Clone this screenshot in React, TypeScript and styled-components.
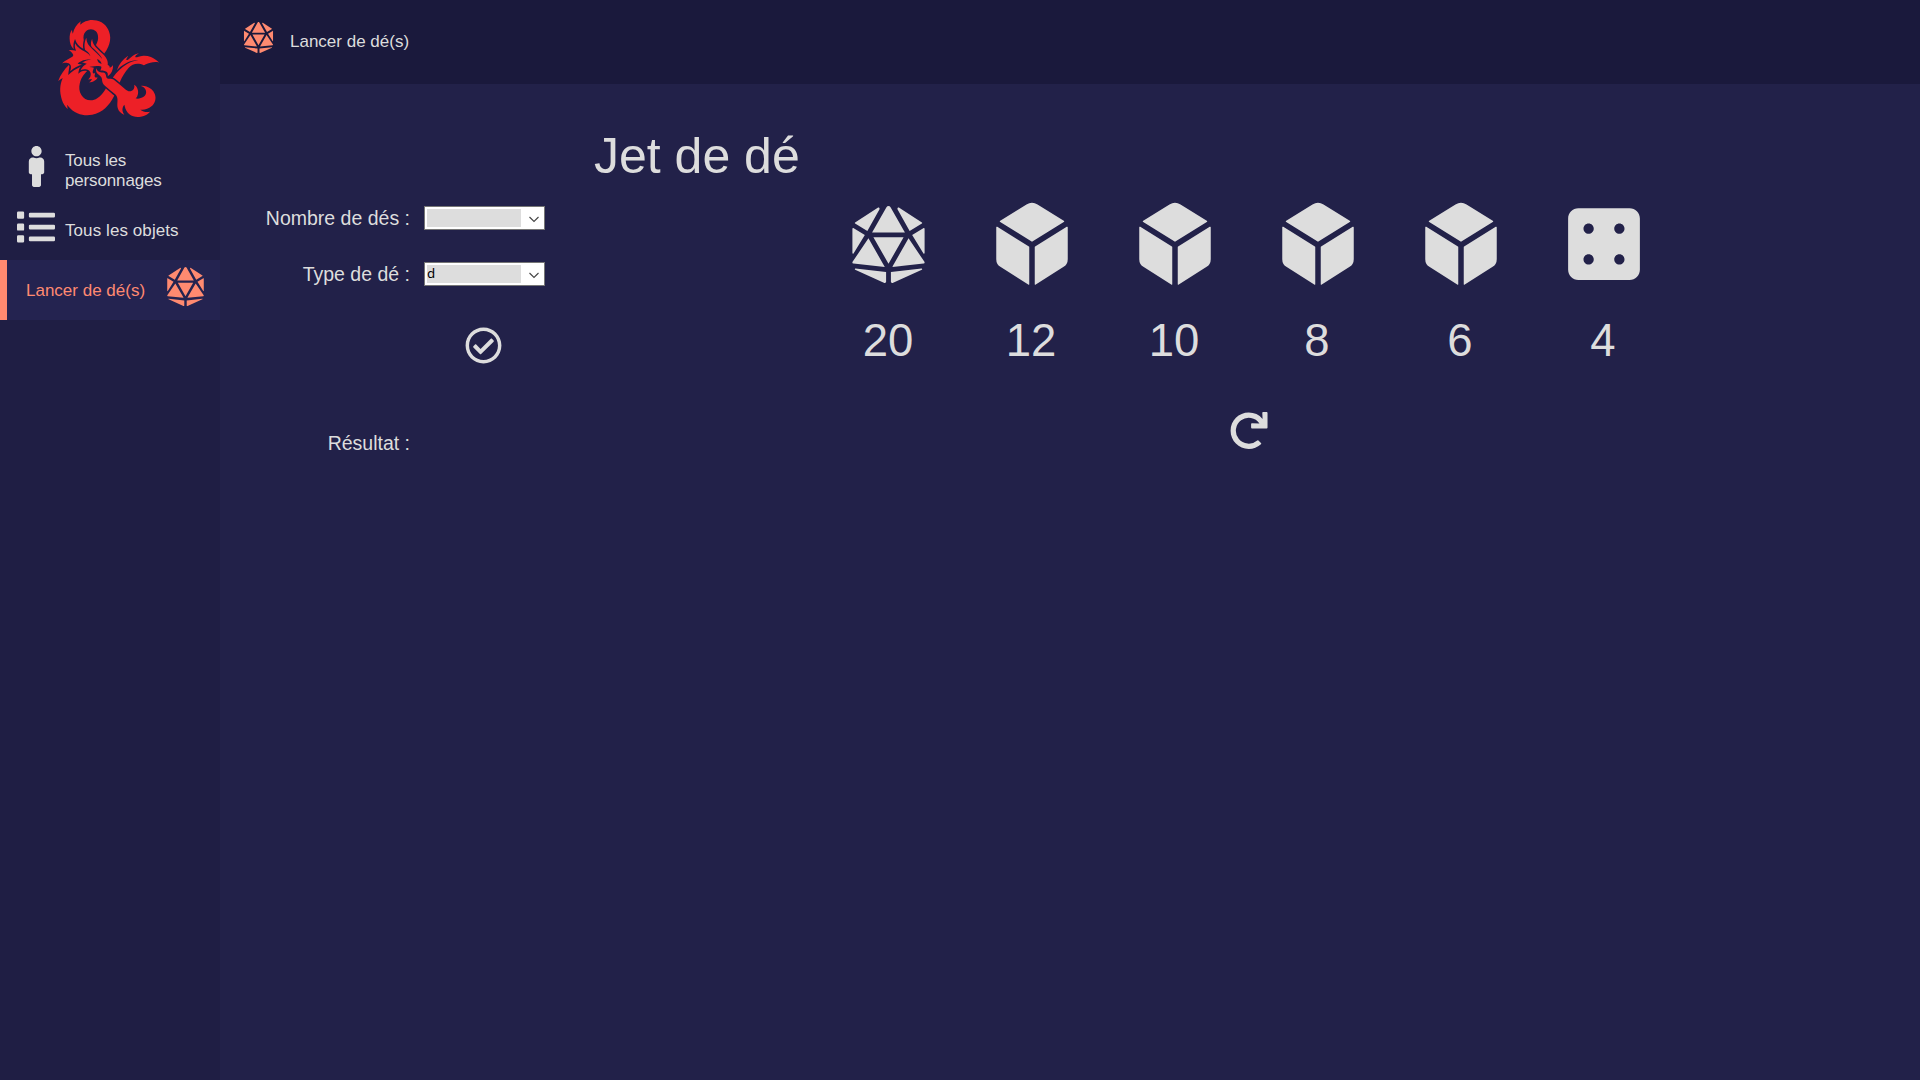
import React from "react";
import styled, { createGlobalStyle } from "styled-components";
import { FaDAndD, FaDiceD20, FaDiceFour, FaList, FaMale, FaRedo, FaRegCheckCircle } from "react-icons/fa";
import { IoCube } from "react-icons/io5";

const GlobalStyle = createGlobalStyle`
  * { box-sizing: border-box; }
  body {
    margin: 0;
    background: #222149;
    color: #dddddd;
    font-family: "Liberation Sans", Arial, sans-serif;
    overflow: hidden;
  }
  svg { display: block; flex: none; }
`;

const Page = styled.div`
  display: flex;
  height: 100vh;
`;

const Sidebar = styled.aside`
  width: 220px;
  flex: none;
  background: #1f1e44;
`;

const Logo = styled.div`
  display: flex;
  justify-content: center;
  height: 140px;
  padding: 14px 4px 0 0;
  color: #ed2027;
`;

const MenuItem = styled.a<{ $active?: boolean }>`
  display: flex;
  height: 60px;
  font-size: 17px;
  line-height: 20px;
  ${(p) =>
    p.$active &&
    `
    background: #242350;
    color: #ff8a70;
    border-left: 7px solid #ff8a70;
  `}
`;

const MenuIcon = styled.span`
  display: flex;
  flex: none;
  width: 65px;
  height: 53px;
  padding-left: 7px;
  align-items: center;
  justify-content: center;
`;

const MenuText = styled.span<{ $top: number; $tracking?: number }>`
  padding-top: ${(p) => p.$top}px;
  letter-spacing: ${(p) => p.$tracking ?? 0}px;
`;

const ActiveText = styled(MenuText)`
  width: 142px;
  padding-left: 19px;
  white-space: nowrap;
`;

const ActiveIcon = styled.span`
  display: flex;
  align-items: center;
  height: 52px;
  padding-left: 17px;
`;

const Main = styled.main`
  flex: 1;
`;

const Header = styled.header`
  display: flex;
  height: 84px;
  padding: 22px 0 0 23px;
  background: #1a193c;
  font-size: 17px;
  line-height: 20px;
`;

const HeaderText = styled.span`
  padding: 10px 0 0 16px;
`;

const Content = styled.section`
  display: flex;
`;

const Left = styled.div`
  width: 597px;
  padding-top: 45px;
`;

const Title = styled.h1`
  margin: 0;
  padding-left: 374px;
  font-size: 50px;
  line-height: 54px;
  font-weight: 400;
  white-space: nowrap;
`;

const Form = styled.div`
  padding-top: 23px;
`;

const Field = styled.div`
  display: flex;
  height: 56px;
`;

const Label = styled.label`
  width: 191px;
  padding-right: 1px;
  text-align: right;
  font-size: 19.5px;
  line-height: 24px;
`;

const Select = styled.div`
  display: flex;
  justify-content: space-between;
  width: 121px;
  height: 24px;
  margin-left: 13px;
  padding: 2px;
  background: #fff;
  border: 1px solid #767676;
`;

const SelectValue = styled.span`
  width: 94px;
  height: 18px;
  background: #dddddd;
  color: #000;
  font-family: "Noto Sans", sans-serif;
  font-size: 13.33px;
  line-height: 17px;
`;

const Chevron = styled.svg`
  margin: 7px 3px 0 0;
`;

const Validate = styled.div`
  display: flex;
  height: 113px;
  padding: 9px 0 0 244.5px;
`;

const Right = styled.div`
  display: flex;
  flex-direction: column;
  width: 860px;
  padding-top: 113px;
`;

const DiceRow = styled.div`
  display: grid;
  grid-template-columns: repeat(6, 143px);
`;

const Die = styled.div`
  display: flex;
  flex-direction: column;
  align-items: center;
`;

const DieIcon = styled.div`
  display: flex;
  align-items: center;
  height: 94px;
`;

const Cube = styled(IoCube).attrs({ preserveAspectRatio: "none" })`
  width: 88px;
  height: 93.5px;
`;

const DieLabel = styled.span`
  margin: 24px 1px 0 0;
  font-size: 45.5px;
  line-height: 52px;
`;

const Reset = styled.div`
  display: flex;
  padding: 45px 0 0 413px;
`;

const SelectBox = ({ value }: { value?: string }) => (
  <Select>
    <SelectValue>{value}</SelectValue>
    <Chevron width="10" height="7" viewBox="0 0 10 7">
      <path d="M0.5 1L5 5.5L9.5 1" fill="none" stroke="#444" strokeWidth="1.1" />
    </Chevron>
  </Select>
);

const dice = [
  { faces: 20, icon: <FaDiceD20 size={77} /> },
  { faces: 12, icon: <Cube /> },
  { faces: 10, icon: <Cube /> },
  { faces: 8, icon: <Cube /> },
  { faces: 6, icon: <Cube /> },
  { faces: 4, icon: <FaDiceFour size={82} /> },
];

export default function App() {
  return (
    <Page>
      <GlobalStyle />
      <Sidebar>
        <Logo>
          <FaDAndD size={109} />
        </Logo>
        <MenuItem>
          <MenuIcon>
            <FaMale size={41} />
          </MenuIcon>
          <MenuText $top={11} $tracking={-0.15}>
            Tous les personnages
          </MenuText>
        </MenuItem>
        <MenuItem>
          <MenuIcon>
            <FaList size={38} />
          </MenuIcon>
          <MenuText $top={21} $tracking={0.08}>
            Tous les objets
          </MenuText>
        </MenuItem>
        <MenuItem $active>
          <ActiveText $top={21}>Lancer de dé(s)</ActiveText>
          <ActiveIcon>
            <FaDiceD20 size={39} />
          </ActiveIcon>
        </MenuItem>
      </Sidebar>
      <Main>
        <Header>
          <FaDiceD20 size={31} color="#ff8a70" />
          <HeaderText>Lancer de dé(s)</HeaderText>
        </Header>
        <Content>
          <Left>
            <Title>Jet de dé</Title>
            <Form>
              <Field>
                <Label>Nombre de dés :</Label>
                <SelectBox />
              </Field>
              <Field>
                <Label>Type de dé :</Label>
                <SelectBox value="d" />
              </Field>
              <Validate>
                <FaRegCheckCircle size={37} />
              </Validate>
              <Field>
                <Label>Résultat :</Label>
              </Field>
            </Form>
          </Left>
          <Right>
            <DiceRow>
              {dice.map((d) => (
                <Die key={d.faces}>
                  <DieIcon>{d.icon}</DieIcon>
                  <DieLabel>{d.faces}</DieLabel>
                </Die>
              ))}
            </DiceRow>
            <Reset>
              <FaRedo size={37.5} />
            </Reset>
          </Right>
        </Content>
      </Main>
    </Page>
  );
}
